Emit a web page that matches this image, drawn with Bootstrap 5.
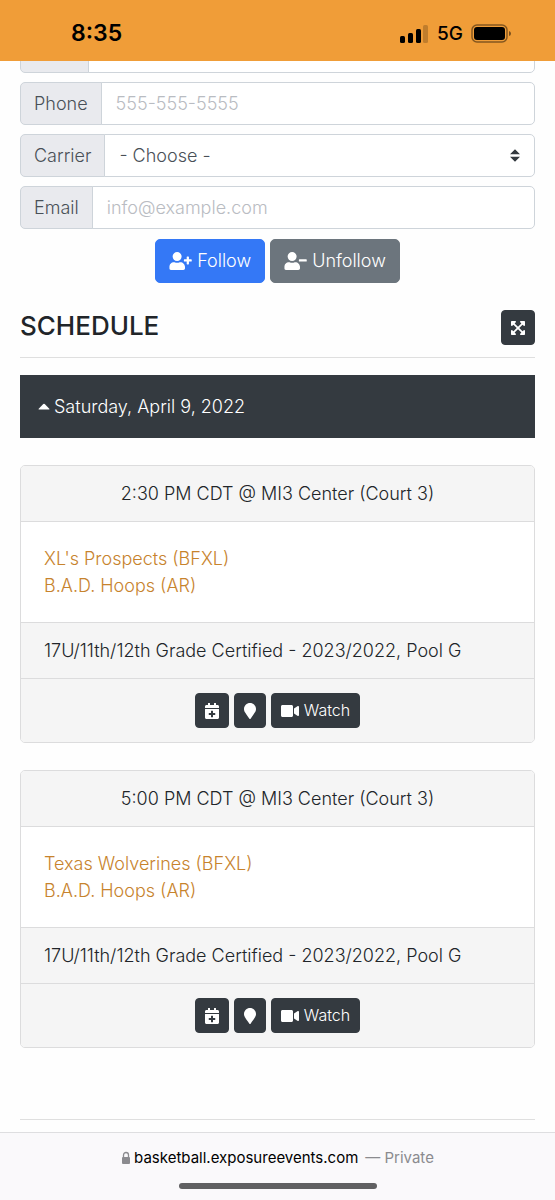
<!DOCTYPE html>
<html lang="en">
<head>
<meta charset="utf-8">
<meta name="viewport" content="width=device-width, initial-scale=1">
<title>Schedule</title>
<link href="https://cdn.jsdelivr.net/npm/bootstrap@5.3.0/dist/css/bootstrap.min.css" rel="stylesheet">
<style>
  body { font-family: Inter, "Liberation Sans", sans-serif; font-size: 18px; font-weight: 350; line-height: 27px; color: #212529; background: #fefefe; }
  .status-bar { background: #f09d38; color: #000; padding: 6px 43px 0 71px; height: 61px; }
  .clock { font-size: 23px; font-weight: 600; }
  .network { font-size: 19px; font-weight: 500; }
  .page-main { padding: 0 20px; }
  .peek { height: 12px; overflow: hidden; }
  .stack { gap: 9px; }
  .input-group > * { height: 43px; font-size: 18px; font-weight: 350; line-height: 27px; border-color: #ced4da; }
  .input-group-text { background: #e9eaee; color: #495057; padding: 7px 13px 8px; border-radius: 5px; }
  .name-addon { width: 69px; }
  .form-control, .form-select { padding: 7px 14px; color: #495057; border-radius: 5px; background-color: #fff; }
  .form-control::placeholder { color: #b9bcc2; opacity: 1; }
  .form-select { background-image: url("data:image/svg+xml,%3Csvg xmlns='http://www.w3.org/2000/svg' viewBox='0 0 4 5'%3E%3Cpath fill='%23343a40' d='M2 0L0 2h4zm0 5L0 3h4z'/%3E%3C/svg%3E"); background-size: 10px 13px; background-position: right 14px center; }
  .follow-row { gap: 5px; margin-top: 10px; }
  .btn { --bs-btn-padding-x: 13px; --bs-btn-padding-y: 7px; --bs-btn-font-size: 18px; --bs-btn-font-weight: 350; --bs-btn-line-height: 28px; --bs-btn-border-radius: 5px; display: inline-flex; align-items: center; gap: 5px; }
  .btn-sm { --bs-btn-padding-x: 9px; --bs-btn-padding-y: 5px; --bs-btn-font-size: 16px; --bs-btn-line-height: 23px; --bs-btn-border-radius: 4px; min-height: 35px; }
  .btn-primary { --bs-btn-bg: #3478f6; --bs-btn-border-color: #3478f6; }
  .btn-dark { --bs-btn-bg: #343a40; --bs-btn-border-color: #343a40; }
  .btn svg { fill: currentColor; flex: none; }
  .section-head { margin: 27px 0 12px; }
  .section-head h2 { font-size: 26px; line-height: 32px; font-weight: 500; margin: 0 0 3px; }
  .rule { color: #000; opacity: .12; margin: 0 0 17px; }
  .day-bar { background: #343a40; color: #fff; padding: 18px; height: 63px; margin-bottom: 27px; }
  .game { --bs-card-border-color: #dcdcdd; --bs-card-cap-bg: #f5f5f5; --bs-card-border-radius: 5px; --bs-card-inner-border-radius: 4px; --bs-card-cap-padding-x: 23px; --bs-card-cap-padding-y: 14px; --bs-card-bg: #fff; margin-bottom: 27px; }
  .game .card-body { padding: 23px; }
  .game a { color: #c7832d; text-decoration: none; }
  .game .actions { gap: 5px; }
  .page-end { margin: 0 20px 12px; }
  .address-bar { background: #faf9fb; border-top: 1px solid #dedee0; height: 68px; padding-top: 13px; font-size: 15px; font-weight: 400; line-height: 24px; color: #000; }
  .address { gap: 3px; }
  .private { color: #8b8b8f; }
  .home-pill { width: 198px; height: 6px; border-radius: 3px; background: #606062; margin-top: 13px; }
</style>
</head>
<body class="d-flex flex-column min-vh-100">
<svg class="d-none" aria-hidden="true">
  <symbol id="calendar" viewBox="0 0 448 512"><path d="M436 160H12c-6.600 0-12-5.400-12-12v-36c0-26.500 21.500-48 48-48h48V12c0-6.600 5.400-12 12-12h40c6.600 0 12 5.400 12 12v52h128V12c0-6.600 5.400-12 12-12h40c6.600 0 12 5.400 12 12v52h48c26.500 0 48 21.500 48 48v36c0 6.600-5.400 12-12 12zM12 192h424c6.600 0 12 5.400 12 12v260c0 26.500-21.500 48-48 48H48c-26.500 0-48-21.500-48-48V204c0-6.600 5.400-12 12-12zm316 140c0-6.600-5.400-12-12-12h-60v-60c0-6.600-5.400-12-12-12h-40c-6.600 0-12 5.400-12 12v60h-60c-6.600 0-12 5.400-12 12v40c0 6.600 5.400 12 12 12h60v60c0 6.600 5.400 12 12 12h40c6.600 0 12-5.400 12-12v-60h60c6.600 0 12-5.400 12-12v-40z"/></symbol>
  <symbol id="marker" viewBox="0 0 384 512"><path d="M172.268 501.670C26.970 291.031 0 269.413 0 192 0 85.961 85.961 0 192 0s192 85.961 192 192c0 77.413-26.970 99.031-172.268 309.670-9.535 13.774-29.930 13.773-39.464 0z"/></symbol>
  <symbol id="video" viewBox="0 0 576 512"><path d="M336.200 64H47.800C21.400 64 0 85.400 0 111.800v288.400C0 426.600 21.400 448 47.800 448h288.400c26.400 0 47.800-21.400 47.800-47.800V111.800c0-26.400-21.400-47.800-47.800-47.800zm189.400 37.700L416 177.300v157.400l109.600 75.500c21.200 14.600 50.400-.3 50.400-25.800V127.500c0-25.400-29.100-40.400-50.400-25.800z"/></symbol>
  <symbol id="person" viewBox="0 0 640 512"><path d="M224 256c70.700 0 128-57.300 128-128S294.700 0 224 0 96 57.300 96 128s57.300 128 128 128zm89.600 32h-16.700c-22.200 10.200-46.900 16-72.900 16s-50.600-5.800-72.900-16h-16.700C60.200 288 0 348.200 0 422.400V464c0 26.500 21.500 48 48 48h352c26.500 0 48-21.500 48-48v-41.600c0-74.200-60.200-134.400-134.400-134.400z"/></symbol>
</svg>

<header class="status-bar d-flex align-items-center">
  <span class="clock me-auto">8:35</span>
  <svg class="me-2" width="30" height="20" viewBox="0 0 30 20" aria-hidden="true"><rect x="1" y="12" width="5" height="7" rx="1.500"/><rect x="9" y="9" width="5" height="10" rx="1.500"/><rect x="17" y="5" width="5" height="14" rx="1.500"/><rect x="24" y="1" width="5" height="18" rx="1.500" opacity=".2"/></svg>
  <span class="network me-2">5G</span>
  <svg width="41" height="20" viewBox="0 0 41 20" aria-hidden="true"><rect x="1" y="1" width="35" height="17" rx="5" fill="none" stroke="#000" stroke-opacity=".45" stroke-width="1.500"/><rect x="3" y="3" width="31" height="13" rx="3"/><path d="M38 7q2 .5 2 2.500t-2 2.500z" opacity=".5"/></svg>
</header>

<main class="page-main">
  <form>
    <div class="d-flex flex-column stack">
      <div class="peek d-flex flex-column justify-content-end">
        <div class="input-group flex-shrink-0"><span class="input-group-text name-addon"></span><input class="form-control" type="text" aria-label="Name"></div>
      </div>
      <div class="input-group"><label class="input-group-text" for="phone">Phone</label><input class="form-control" id="phone" type="tel" placeholder="555-555-5555"></div>
      <div class="input-group"><label class="input-group-text" for="carrier">Carrier</label><select class="form-select" id="carrier"><option>- Choose -</option></select></div>
      <div class="input-group"><label class="input-group-text" for="email">Email</label><input class="form-control" id="email" type="email" placeholder="info@example.com"></div>
    </div>
    <div class="d-flex justify-content-center follow-row">
      <button class="btn btn-primary" type="button"><svg width="23" height="18" viewBox="0 0 640 512" aria-hidden="true"><use href="#person"/><path d="M624 208h-64v-64c0-8.800-7.200-16-16-16h-32c-8.800 0-16 7.200-16 16v64h-64c-8.800 0-16 7.200-16 16v32c0 8.800 7.200 16 16 16h64v64c0 8.800 7.200 16 16 16h32c8.800 0 16-7.200 16-16v-64h64c8.800 0 16-7.200 16-16v-32c0-8.800-7.200-16-16-16z"/></svg>Follow</button>
      <button class="btn btn-secondary" type="button"><svg width="23" height="18" viewBox="0 0 640 512" aria-hidden="true"><use href="#person"/><rect x="416" y="208" width="224" height="64" rx="16"/></svg>Unfollow</button>
    </div>
  </form>

  <div class="d-flex justify-content-between align-items-center section-head">
    <h2>SCHEDULE</h2>
    <button class="btn btn-dark btn-sm" type="button" aria-label="Expand"><svg width="14" height="16" viewBox="0 0 448 512" aria-hidden="true"><path d="M448 344v112a23.940 23.940 0 0 1-24 24H312c-21.390 0-32.090-25.900-17-41l36.200-36.200L224 295.600 116.770 402.900 153 439c15.090 15.100 4.390 41-17 41H24a23.940 23.940 0 0 1-24-24V344c0-21.400 25.890-32.100 41-17l36.190 36.200L184.460 256 77.180 148.700 41 185c-15.100 15.100-41 4.400-41-17V56a23.940 23.940 0 0 1 24-24h112c21.390 0 32.090 25.900 17 41l-36.200 36.200L224 216.400l107.230-107.300L295 73c-15.090-15.100-4.390-41 17-41h112a23.940 23.940 0 0 1 24 24v112c0 21.400-25.890 32.100-41 17l-36.190-36.200L263.540 256l107.280 107.300L407 327.100c15.100-15.200 41-4.500 41 16.900z"/></svg></button>
  </div>
  <hr class="rule">

  <div class="day-bar d-flex align-items-center"><svg class="me-1" width="12" height="7" viewBox="0 0 12 7" fill="#fff" aria-hidden="true"><path d="M1 6.500Q0 6.500 .7 5.700L5.300 1q.7-.7 1.400 0l4.600 4.700q.7.800-.3.800z"/></svg>Saturday, April 9, 2022</div>

  <article class="card game">
    <div class="card-header text-center">2:30 PM CDT @ MI3 Center (Court 3)</div>
    <div class="card-body"><a class="d-block" href="#">XL's Prospects (BFXL)</a><a class="d-block" href="#">B.A.D. Hoops (AR)</a></div>
    <div class="card-footer">17U/11th/12th Grade Certified - 2023/2022, Pool G</div>
    <div class="card-footer d-flex justify-content-center actions">
      <button class="btn btn-dark btn-sm" type="button" aria-label="Add to calendar"><svg width="14" height="16"><use href="#calendar"/></svg></button>
      <button class="btn btn-dark btn-sm" type="button" aria-label="Map"><svg width="12" height="16"><use href="#marker"/></svg></button>
      <button class="btn btn-dark btn-sm" type="button"><svg width="18" height="16"><use href="#video"/></svg>Watch</button>
    </div>
  </article>

  <article class="card game">
    <div class="card-header text-center">5:00 PM CDT @ MI3 Center (Court 3)</div>
    <div class="card-body"><a class="d-block" href="#">Texas Wolverines (BFXL)</a><a class="d-block" href="#">B.A.D. Hoops (AR)</a></div>
    <div class="card-footer">17U/11th/12th Grade Certified - 2023/2022, Pool G</div>
    <div class="card-footer d-flex justify-content-center actions">
      <button class="btn btn-dark btn-sm" type="button" aria-label="Add to calendar"><svg width="14" height="16"><use href="#calendar"/></svg></button>
      <button class="btn btn-dark btn-sm" type="button" aria-label="Map"><svg width="12" height="16"><use href="#marker"/></svg></button>
      <button class="btn btn-dark btn-sm" type="button"><svg width="18" height="16"><use href="#video"/></svg>Watch</button>
    </div>
  </article>
</main>

<footer class="mt-auto">
  <hr class="rule page-end">
  <div class="address-bar">
    <div class="d-flex justify-content-center align-items-center address"><svg width="10" height="14" viewBox="0 0 10 14" aria-hidden="true"><rect y="6" x="1" width="8" height="7" rx="1" fill="#8b8b8f"/><path d="M2.500 6.500V4a2.500 2.500 0 0 1 5 0v2.500" fill="none" stroke="#8b8b8f" stroke-width="1.300"/></svg><span>basketball.exposureevents.com</span><span class="private ms-1">— Private</span></div>
    <div class="home-pill mx-auto"></div>
  </div>
</footer>
<script src="https://cdn.jsdelivr.net/npm/bootstrap@5.3.0/dist/js/bootstrap.bundle.min.js"></script>
</body>
</html>
